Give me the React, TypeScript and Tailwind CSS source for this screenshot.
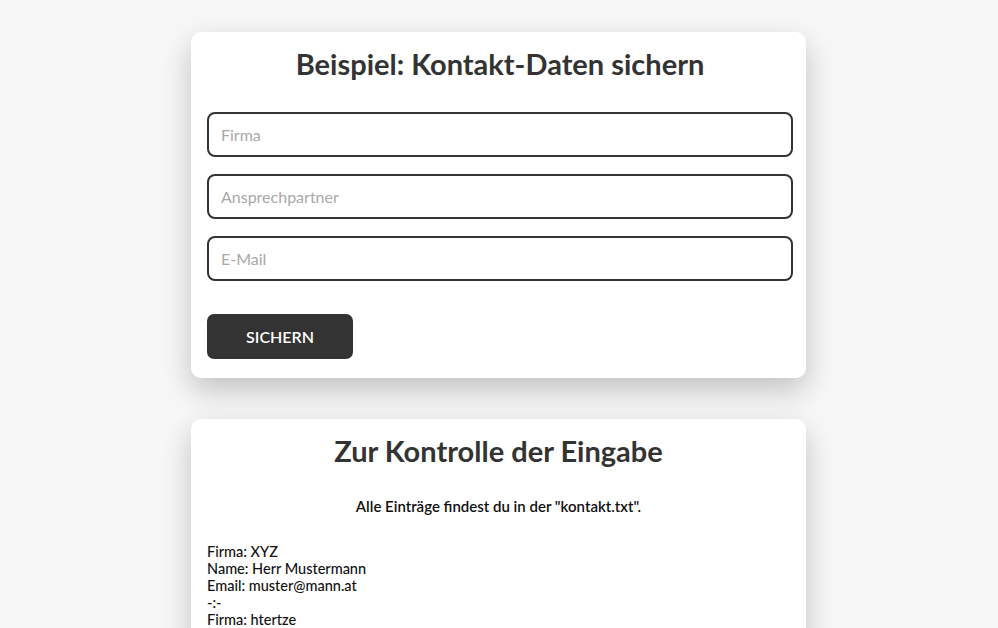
export default function App() {
  const font = { fontFamily: '"Lato", "Open Sans", sans-serif' };
  return (
    <div className="min-h-screen w-full bg-[#f7f7f7] pt-8 pb-8" style={font}>
      <div className="ml-[191px] flex w-[615px] flex-col gap-[41px]">
        <div className="rounded-[10px] bg-white pl-4 pr-[13px] pt-[18px] pb-[19px] shadow-[0_12px_30px_rgba(0,0,0,0.22)]">
          <h1 className="text-center text-[29px] font-bold leading-[28px] text-[#333]">
            Beispiel: Kontakt-Daten sichern
          </h1>
          <div className="mt-[34px] flex flex-col gap-[17px]">
            {["Firma", "Ansprechpartner", "E-Mail"].map((p) => (
              <input
                key={p}
                placeholder={p}
                className="h-[45px] w-full rounded-[8px] border-2 border-[#333] bg-white px-3 text-[16px] text-[#333] outline-none placeholder:text-[#a9a9a9]"
                style={font}
              />
            ))}
          </div>
          <button
            className="mt-[33px] h-[45px] w-[146px] rounded-[7px] bg-[#333] text-[16px] font-semibold text-white"
            style={font}
          >
            SICHERN
          </button>
        </div>
        <div className="rounded-[10px] bg-white px-4 pt-[18px] pb-10 shadow-[0_12px_30px_rgba(0,0,0,0.22)]">
          <h2 className="text-center text-[29px] font-bold leading-[28px] text-[#333]">
            Zur Kontrolle der Eingabe
          </h2>
          <p className="mt-[30px] text-center text-[15px] font-semibold text-[#111]">
            Alle Einträge findest du in der "kontakt.txt".
          </p>
          <div className="mt-[25px] text-[14.5px] leading-[17px] font-medium text-[#111]">
            <div>Firma: XYZ</div>
            <div>Name: Herr Mustermann</div>
            <div>Email: muster@mann.at</div>
            <div>-:-</div>
            <div>Firma: htertze</div>
          </div>
        </div>
      </div>
    </div>
  );
}
